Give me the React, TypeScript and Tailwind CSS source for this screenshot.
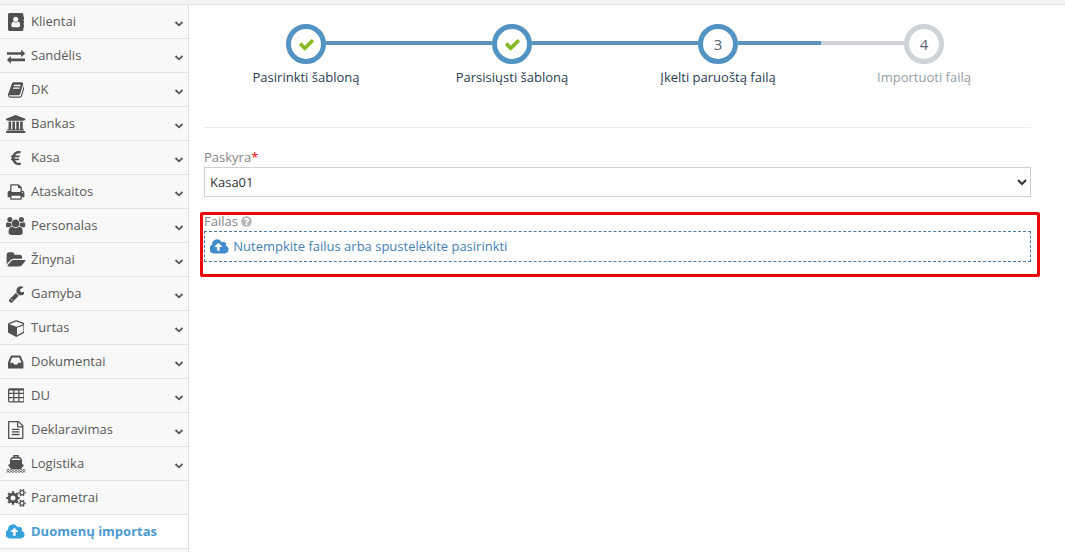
import { useState } from "react";
import { FaEuroSign, FaQuestionCircle } from "react-icons/fa";

const paths = {
    addressBook: "M1028 644q0 107-76.500 183t-183.500 76-183.500-76-76.500-183q0-108 76.500-184t183.500-76 183.500 76 76.500 184zm-48 220q46 0 82.500 17t60 47.500 39.500 67 24 81 11.500 82.500 3.500 79q0 67-39.500 118.500t-105.500 51.500h-576q-66 0-105.500-51.500t-39.500-118.500q0-48 4.500-93.500t18.500-98.500 36.500-91.500 63-64.500 93.500-26h5q7 4 32 19.500t35.500 21 33 17 37 16 35 9 39.500 4.500 39.500-4.500 35-9 37-16 33-17 35.500-21 32-19.500zM1664 608q0 13-9.500 22.500t-22.500 9.500h-96v128h96q13 0 22.500 9.500t9.500 22.500v192q0 13-9.500 22.500t-22.500 9.500h-96v128h96q13 0 22.500 9.500t9.500 22.500v192q0 13-9.500 22.500t-22.500 9.500h-96v224q0 66-47 113t-113 47h-1216q-66 0-113-47t-47-113v-1472q0-66 47-113t113-47h1216q66 0 113 47t47 113v224h96q13 0 22.500 9.500t9.500 22.500z",
    exchange: "M1792 1184v192q0 13-9.500 22.500t-22.500 9.500h-1376v192q0 13-9.500 22.500t-22.500 9.500q-12 0-24-10l-319-320q-9-9-9-22 0-14 9-23l320-320q9-9 23-9 13 0 22.500 9.500t9.500 22.500v192h1376q13 0 22.500 9.500t9.500 22.500zm0-544q0 14-9 23l-320 320q-9 9-23 9-13 0-22.500-9.500t-9.500-22.500v-192h-1376q-13 0-22.500-9.500t-9.500-22.500v-192q0-13 9.500-22.500t22.500-9.500h1376v-192q0-14 9-23t23-9q12 0 24 10l319 319q9 9 9 23z",
    book: "M1639 478q40 57 18 129l-275 906q-19 64-76.500 107.500t-122.500 43.500h-923q-77 0-148.500-53.500t-99.500-131.500q-24-67-2-127 0-4 3-27t4-37q1-8-3-21.500t-3-19.500q2-11 8-21t16.500-23.500 16.500-23.500q23-38 45-91.500t30-91.500q3-10 .5-30t-.5-28q3-11 17-28t17-23q21-36 42-92t25-90q1-9-2.500-32t.5-28q4-13 22-30.500t22-22.500q19-26 42.500-84.500t27.500-96.500q1-8-3-25.500t-2-26.500q2-8 9-18t18-23 17-21q8-12 16.500-30.500t15-35 16-36 19.500-32 26.500-23.500 36-11.500 47.500 5.500l-1 3q38-9 51-9h761q74 0 114 56t18 130l-274 906q-36 119-71.500 153.500t-128.500 34.500h-869q-27 0-38 15-11 16-1 43 24 70 144 70h923q29 0 56-15.500t35-41.500l300-987q7-22 5-57 38 15 59 43zm-1064 2q-4 13 2 22.500t20 9.500h608q13 0 25.500-9.500t16.500-22.500l21-64q4-13-2-22.500t-20-9.500h-608q-13 0-25.500 9.500t-16.500 22.500zm-83 256q-4 13 2 22.500t20 9.500h608q13 0 25.500-9.500t16.500-22.500l21-64q4-13-2-22.500t-20-9.500h-608q-13 0-25.500 9.500t-16.500 22.500z",
    bank: "M960 0l960 384v128h-128q0 26-20.500 45t-48.500 19h-1526q-28 0-48.500-19t-20.500-45h-128v-128zm-704 640h256v768h128v-768h256v768h128v-768h256v768h128v-768h256v768h59q28 0 48.500 19t20.500 45v64h-1664v-64q0-26 20.500-45t48.500-19h59v-768zm1595 960q28 0 48.500 19t20.500 45v128h-1920v-128q0-26 20.500-45t48.500-19h1782z",
    print: "M448 1536h896v-256h-896v256zm0-640h896v-384h-160q-40 0-68-28t-28-68v-160h-640v640zm1152 64q0-26-19-45t-45-19-45 19-19 45 19 45 45 19 45-19 19-45zm128 0v416q0 13-9.500 22.500t-22.500 9.500h-224v160q0 40-28 68t-68 28h-960q-40 0-68-28t-28-68v-160h-224q-13 0-22.500-9.500t-9.500-22.500v-416q0-79 56.500-135.500t135.500-56.500h64v-544q0-40 28-68t68-28h672q40 0 88 20t76 48l152 152q28 28 48 76t20 88v256h64q79 0 135.500 56.500t56.500 135.500z",
    users: "M593 896q-162 5-265 128h-134q-82 0-138-40.500t-56-118.500q0-353 124-353 6 0 43.500 21t97.500 42.500 119 21.500q67 0 133-23-5 37-5 66 0 139 81 256zm1071 637q0 120-73 189.500t-194 69.500h-874q-121 0-194-69.500t-73-189.500q0-53 3.500-103.500t14-109 26.500-108.500 43-97.500 62-81 85.500-53.500 111.500-20q10 0 43 21.500t73 48 107 48 135 21.500 135-21.500 107-48 73-48 43-21.500q61 0 111.500 20t85.500 53.500 62 81 43 97.500 26.500 108.500 14 109 3.500 103.500zm-1024-1277q0 106-75 181t-181 75-181-75-75-181 75-181 181-75 181 75 75 181zm704 384q0 159-112.500 271.500t-271.500 112.500-271.500-112.500-112.500-271.500 112.500-271.500 271.500-112.500 271.500 112.500 112.500 271.500zm576 225q0 78-56 118.500t-138 40.500h-134q-103-123-265-128 81-117 81-256 0-29-5-66 66 23 133 23 59 0 119-21.500t97.500-42.500 43.500-21q124 0 124 353zm-128-609q0 106-75 181t-181 75-181-75-75-181 75-181 181-75 181 75 75 181z",
    folder: "M1943 952q0 31-31 66l-336 396q-43 51-120.500 86.500t-143.500 35.500h-1088q-34 0-60.500-13t-26.500-43q0-31 31-66l336-396q43-51 120.500-86.500t143.500-35.500h1088q34 0 60.500 13t26.500 43zm-343-344v160h-832q-94 0-197 47.500t-164 119.500l-337 396-5 6q0-4-.5-12.500t-.5-12.500v-960q0-92 66-158t158-66h320q92 0 158 66t66 158v32h544q92 0 158 66t66 158z",
    wrench: "M448 1472q0-26-19-45t-45-19-45 19-19 45 19 45 45 19 45-19 19-45zm644-420l-682 682q-37 37-90 37-52 0-91-37l-106-108q-38-36-38-90 0-53 38-91l681-681q39 98 114.500 173.500t173.500 114.500zm634-435q0 39-23 106-47 134-164.500 217.500t-258.500 83.500q-185 0-316.500-131.500t-131.500-316.500 131.500-316.500 316.500-131.500q58 0 121.500 16.500t107.500 46.500q16 11 16 28t-16 28l-293 169v224l193 107q5-3 79-48.500t135.500-81 70.500-35.500q15 0 23.500 10t8.500 25z",
    cube: "M896 1629l640-349v-636l-640 233v752zm-64-865l698-254-698-254-698 254zm832-252v768q0 35-18 65t-49 47l-704 384q-28 16-61 16t-61-16l-704-384q-31-17-49-47t-18-65v-768q0-40 23-73t61-47l704-256q22-8 44-8t44 8l704 256q38 14 61 47t23 73z",
    inbox: "M1023 960h316q-1-3-2.500-8t-2.500-8l-212-496h-708l-212 496q-1 2-2.500 8t-2.500 8h316l95 192h320zm513 30v482q0 26-19 45t-45 19h-1408q-26 0-45-19t-19-45v-482q0-62 25-123l238-552q10-25 36.500-42t52.500-17h832q26 0 52.500 17t36.500 42l238 552q25 61 25 123z",
    table: "M160 128h1344q66 0 113 47t47 113v1088q0 66-47 113t-113 47h-1344q-66 0-113-47t-47-113v-1088q0-66 47-113t113-47zM128 352v224h384v-224zM640 352v224h384v-224zM1152 352v224h384v-224zM128 704v288h384v-288zM640 704v288h384v-288zM1152 704v288h384v-288zM128 1120v288h384v-288zM640 1120v288h384v-288zM1152 1120v288h384v-288z",
    file: "M1468 380q28 28 48 76t20 88v1152q0 40-28 68t-68 28h-1344q-40 0-68-28t-28-68v-1600q0-40 28-68t68-28h896q40 0 88 20t76 48zm-444-244v376h376q-10-29-22-41l-313-313q-12-12-41-22zm384 1528v-1024h-416q-40 0-68-28t-28-68v-416h-768v1536h1280zM384 768h768v128h-768zM384 1024h768v128h-768zM384 1280h768v128h-768z",
    cloud: "M1216 864q0-14-9-23l-352-352q-9-9-23-9t-23 9l-351 351q-10 12-10 24 0 14 9 23t23 9h224v352q0 13 9.500 22.500t22.500 9.500h192q13 0 22.500-9.500t9.500-22.500v-352h224q13 0 22.500-9.500t9.500-22.500zm640 288q0 159-112.500 271.500t-271.500 112.500h-1088q-185 0-316.500-131.500t-131.500-316.500q0-130 70-240t188-165q-2-30-2-43 0-212 150-362t362-150q156 0 285.500 87t188.500 231q71-62 166-62 106 0 181 75t75 181q0 76-41 138 130 31 213.500 135.500t83.500 238.500z",
    check: "M1671 566q0 40-28 68l-724 724-136 136q-28 28-68 28t-68-28l-136-136-362-362q-28-28-28-68t28-68l136-136q28-28 68-28t68 28l294 295 656-657q28-28 68-28t68 28l136 136q28 28 28 68z",
};

type IconName = keyof typeof paths;

function Icon({ name, width = 1664, className = "h-[18px]" }: { name: IconName; width?: number; className?: string }) {
    return (
        <svg viewBox={`0 0 ${width} 1792`} className={className} fill="currentColor" aria-hidden="true">
            <path fillRule="evenodd" d={paths[name]} />
        </svg>
    );
}

function ShipIcon() {
    return (
        <svg viewBox="0 0 20 18" className="h-[18px]" fill="none" stroke="currentColor" aria-hidden="true">
            <path fill="currentColor" stroke="none" d="M4 5h12v4l2 1-3 4H5l-3-4 2-1z" />
            <path strokeWidth="1.4" d="M4.700 6V4.500l1.500-1.800h7.600l1.500 1.800V6M8 2.500V.7h4v1.800" />
            <path strokeWidth="1" d="M.5 15.500l1.600-1.300 1.600 1.300 1.600-1.300 1.600 1.300 1.600-1.300 1.600 1.300 1.600-1.300 1.600 1.300 1.600-1.300 1.600 1.300 1.600-1.300 1.300 1.300" />
            <path strokeWidth="1" d="M.5 17.500l1.600-1.300 1.600 1.300 1.600-1.300 1.600 1.300 1.600-1.300 1.600 1.300 1.600-1.300 1.600 1.300 1.600-1.300 1.600 1.300 1.600-1.300 1.300 1.300" />
        </svg>
    );
}

// each gear is a ring plus a dashed outer ring for the teeth
function CogsIcon() {
    return (
        <svg viewBox="0 0 20 18" className="h-[18px]" fill="none" stroke="currentColor" aria-hidden="true">
            <circle cx="7" cy="9" r="3.900" strokeWidth="2.800" />
            <circle cx="7" cy="9" r="5.800" strokeWidth="2" pathLength="16" strokeDasharray="1 1" strokeDashoffset="0.5" />
            <circle cx="16" cy="3.700" r="2" strokeWidth="1.300" />
            <circle cx="16" cy="3.700" r="3.100" strokeWidth="1.200" pathLength="12" strokeDasharray="1 1" strokeDashoffset="0.5" />
            <circle cx="16" cy="14.300" r="2" strokeWidth="1.300" />
            <circle cx="16" cy="14.300" r="3.100" strokeWidth="1.200" pathLength="12" strokeDasharray="1 1" strokeDashoffset="0.5" />
        </svg>
    );
}

const menu = [
    { label: "Klientai", icon: <Icon name="addressBook" />, sub: true },
    { label: "Sandėlis", icon: <Icon name="exchange" width={1792} />, sub: true },
    { label: "DK", icon: <Icon name="book" />, sub: true },
    { label: "Bankas", icon: <Icon name="bank" width={1920} />, sub: true },
    { label: "Kasa", icon: <FaEuroSign className="size-4" />, sub: true },
    { label: "Ataskaitos", icon: <Icon name="print" width={1792} />, sub: true },
    { label: "Personalas", icon: <Icon name="users" width={1920} />, sub: true },
    { label: "Žinynai", icon: <Icon name="folder" width={1920} />, sub: true },
    { label: "Gamyba", icon: <Icon name="wrench" />, sub: true },
    { label: "Turtas", icon: <Icon name="cube" />, sub: true },
    { label: "Dokumentai", icon: <Icon name="inbox" width={1536} />, sub: true },
    { label: "DU", icon: <Icon name="table" />, sub: true },
    { label: "Deklaravimas", icon: <Icon name="file" width={1536} />, sub: true },
    { label: "Logistika", icon: <ShipIcon />, sub: true },
    { label: "Parametrai", icon: <CogsIcon />, sub: false },
    { label: "Duomenų importas", icon: <Icon name="cloud" width={1920} />, sub: false, active: true },
];

const steps = [
    { id: 1, label: "Pasirinkti šabloną", status: "done" },
    { id: 2, label: "Parsisiųsti šabloną", status: "done" },
    { id: 3, label: "Įkelti paruoštą failą", status: "current" },
    { id: 4, label: "Importuoti failą", status: "todo" },
];

function Sidebar() {
    return (
        <nav className="w-[189px] shrink-0 border-r border-[#dcdcdc] bg-[#f8f8f8]">
            <ul>
                {menu.map(m => (
                    <li key={m.label} className="border-b border-[#e2e2e2]">
                        <a
                            href="#"
                            className={`flex h-[33px] items-center pl-px pr-1 ${m.active ? "bg-white font-bold text-[#4a9bd1]" : "text-[#585858]"}`}
                        >
                            <span className={`flex w-[30px] justify-center ${m.active ? "text-[#35a2dc]" : "text-[#505050]"}`}>{m.icon}</span>
                            <span className="flex-1">{m.label}</span>
                            {m.sub && (
                                <svg viewBox="0 0 10 10" className="mt-1 size-[10px]" fill="none" stroke="currentColor" strokeWidth="1.8">
                                    <path d="M1.500 3 5 6.300 8.500 3" />
                                </svg>
                            )}
                        </a>
                    </li>
                ))}
            </ul>
        </nav>
    );
}

function Steps() {
    return (
        <ol className="grid grid-cols-4 pl-[14px] pr-[38px]">
            {steps.map((s, i) => {
                const line = s.status === "todo" ? "bg-[#ced1d6]" : "bg-[#5b93bc]";
                return (
                    <li key={s.id}>
                        <div className="flex">
                            <span className={`mt-[17px] h-1 flex-1 ${i === 0 ? "" : line}`} />
                            <span
                                className={`flex size-10 items-center justify-center rounded-full border-5 text-[15px] text-[#546474] ${s.status === "todo" ? "border-[#ced1d6]" : "border-[#5293c4]"}`}
                            >
                                {s.status === "done" ? <Icon name="check" width={1792} className="size-[17px] text-[#87ba21]" /> : s.id}
                            </span>
                            <span className={`mt-[17px] h-1 flex-1 ${i === steps.length - 1 ? "" : line}`} />
                        </div>
                        <p className={`mt-1 text-center leading-[18px] ${s.status === "todo" ? "text-[#949ea7]" : "text-[#2b3d53]"}`}>{s.label}</p>
                    </li>
                );
            })}
        </ol>
    );
}

export default function App() {
    const [account, setAccount] = useState("Kasa01");

    return (
        <div className="flex min-h-screen flex-col bg-white font-['Open_Sans',sans-serif] text-[13px]">
            <div className="h-[5px] border-b border-[#e2e2e2] bg-[#f3f3f3]" />
            <div className="flex flex-1">
                <Sidebar />
                <main className="min-w-0 flex-1 pt-[19px]">
                    <Steps />
                    <form className="ml-[15px] mr-[34px] mt-[41px] border-t border-[#ececec] pt-5">
                        <label htmlFor="account" className="block leading-[19px] text-[#858585]">
                            Paskyra<span className="text-[#f00]">*</span>
                        </label>
                        <select
                            id="account"
                            value={account}
                            onChange={e => setAccount(e.target.value)}
                            className="block h-[30px] w-full border border-[#d0d0d0] bg-white px-px text-[#333]"
                        >
                            <option>Kasa01</option>
                        </select>

                        <div className="relative mt-[15px]">
                            <label htmlFor="file" className="flex items-center gap-[3px] leading-[19px] text-[#858585]">
                                Failas
                                <FaQuestionCircle className="size-[11px] text-[#b8b8b8]" />
                            </label>
                            <label
                                htmlFor="file"
                                className="flex h-[31px] cursor-pointer items-center gap-1 border border-dashed border-[#4b7ca3] pl-[5px] text-[#4480b5]"
                            >
                                <Icon name="cloud" width={1920} className="h-[18px] text-[#428bca]" />
                                Nutempkite failus arba spustelėkite pasirinkti
                                <input id="file" type="file" className="sr-only" />
                            </label>
                            <div className="pointer-events-none absolute -bottom-[15px] -left-1 -right-[9px] top-0 rounded-xs border-3 border-[#ee0509]" />
                        </div>
                    </form>
                </main>
            </div>
        </div>
    );
}
